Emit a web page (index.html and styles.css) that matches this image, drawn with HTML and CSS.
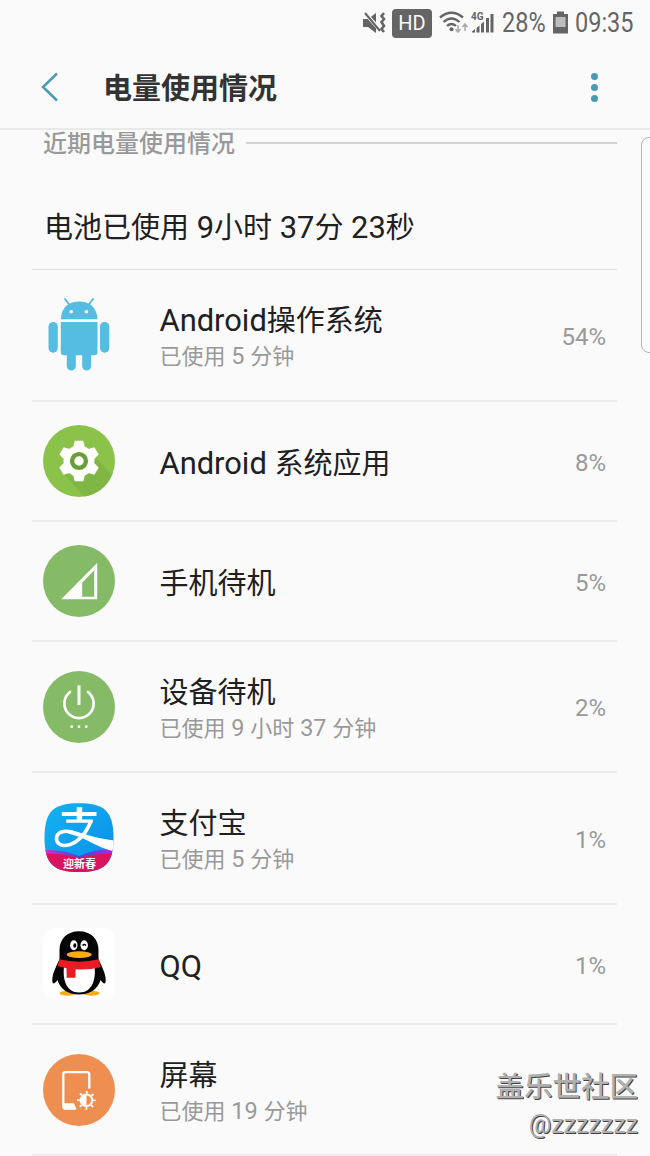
FILE: index.html
```html
<!DOCTYPE html>
<html lang="zh-CN">
<head>
    <meta charset="UTF-8">
    <title>电量使用情况</title>
    <link rel="stylesheet" href="styles.css">
</head>
<body>
<div class="status">
    <svg class="mute" width="24" height="24" viewBox="0 0 24 24">
        <path d="M0 8h5l8-6v20l-8-6H0z" fill="#656565"/>
        <path d="M1 1l17 19" stroke="#fafafa" stroke-width="4"/>
        <path d="M2 2l15 18" stroke="#656565" stroke-width="2"/>
        <path d="M21 2l-2.500 3 2.500 3-2.500 3 2.500 4-2.500 3 2.500 3" fill="none" stroke="#656565" stroke-width="2.600"/>
    </svg>
    <span class="hd">HD</span>
    <svg class="wifi" width="30" height="24" viewBox="0 0 30 24">
        <path d="M1 6.500Q12.500-3 24 6.500M4.500 11Q12.500 4 20.500 11M8 15Q12.500 11 17 15" fill="none" stroke="#656565" stroke-width="2.300"/>
        <circle cx="12.500" cy="18.200" r="2" fill="#656565"/>
        <path d="M19 14v6M16.500 18l2.500 3 2.500-3M26 20v-6M23.500 16l2.500-3 2.500 3" fill="none" stroke="#aaa" stroke-width="1.500"/>
    </svg>
    <svg class="signal" width="24" height="24" viewBox="0 0 24 24">
        <text x="-1" y="9" class="net">4G</text>
        <path d="M0 21.500v-1l3-2.500v3.500zM4.500 17l3-2.500v7H4.500zM9 13l3-2.500v11H9zM14 7h3v14.500h-3zM18.500 3h3v18.500h-3z" fill="#656565"/>
    </svg>
    <span class="level">28%</span>
    <svg class="battery" width="15" height="24" viewBox="0 0 15 24">
        <path d="M4 0.500h7V3h4v19.500H0V3h4z" fill="#656565"/>
        <path d="M2.500 6h10v10h-10z" fill="#bdbdbd"/>
    </svg>
    <span class="clock">09:35</span>
</div>

<div class="header">
    <svg class="back" width="18" height="30" viewBox="0 0 18 30">
        <path d="M17 1.500L3 15l14 13.500" fill="none" stroke="#4a9bb2" stroke-width="2.500"/>
    </svg>
    <h1>电量使用情况</h1>
    <div class="more"><i></i><i></i><i></i></div>
</div>

<div class="section"><span>近期电量使用情况</span></div>

<div class="list">
    <div class="total">电池已使用<em> 9</em>小时<em> 37</em>分<em> 23</em>秒</div>

    <div class="row two">
        <svg class="icon" viewBox="0 0 72 72">
            <g fill="#55bde2">
                <path d="M17.800 20.200C18.500 8 26 2.500 36.200 2.500S53.800 8 54.500 20.200z"/>
                <path d="M22 0l4.500 6M50 0l-4.500 6" stroke="#55bde2" stroke-width="2" stroke-linecap="round"/>
                <rect x="5.500" y="23" width="9.300" height="30.700" rx="4.600"/>
                <rect x="57" y="23" width="9.300" height="30.700" rx="4.600"/>
                <path d="M17.800 23h36.700v30.200a3 3 0 0 1-3 3H20.800a3 3 0 0 1-3-3z"/>
                <path d="M23.800 54h9v13a4.500 4.500 0 0 1-9 0zM39.200 54h9v13a4.500 4.500 0 0 1-9 0z"/>
            </g>
            <circle cx="28.200" cy="12.800" r="1.800" fill="#fafafa"/>
            <circle cx="43.400" cy="12.800" r="1.800" fill="#fafafa"/>
        </svg>
        <div class="info"><p class="name"><em>Android</em>操作系统</p><p class="used">已使用<em> 5 </em>分钟</p></div>
        <span class="pct">54%</span>
    </div>

    <div class="row">
        <svg class="icon" viewBox="0 0 72 72">
            <circle cx="36" cy="36" r="36" fill="#8bc34a"/>
            <path d="M21 49l20 22.500A36 36 0 0 0 69 50L54 34z" fill="#7fb644"/>
            <g fill="#fff">
                <circle cx="36" cy="36" r="15.500"/>
                <path id="tooth" d="M31.700 15.700h8.600l2 8v24.600l-2 8h-8.600l-2-8V23.700z"/>
                <use href="#tooth" transform="rotate(60 36 36)"/>
                <use href="#tooth" transform="rotate(120 36 36)"/>
            </g>
            <circle cx="36" cy="36" r="6.900" fill="#fff" stroke="#689f38" stroke-width="4.400"/>
        </svg>
        <div class="info"><p class="name"><em>Android </em>系统应用</p></div>
        <span class="pct">8%</span>
    </div>

    <div class="row">
        <svg class="icon" viewBox="0 0 72 72">
            <circle cx="36" cy="36" r="36" fill="#85bb66"/>
            <path d="M18.200 54.300l36-36.300v36.300zM39.200 37.700v14h12V25.300z" fill="#fff" fill-rule="evenodd"/>
        </svg>
        <div class="info"><p class="name">手机待机</p></div>
        <span class="pct">5%</span>
    </div>

    <div class="row two device">
        <svg class="icon" viewBox="0 0 72 72">
            <circle cx="36" cy="36" r="36" fill="#85bb66"/>
            <path d="M27 21a14.600 14.600 0 1 0 18 0" fill="none" stroke="#fff" stroke-width="2.700" stroke-linecap="round"/>
            <path d="M36 14.300v19.700" stroke="#fff" stroke-width="3"/>
            <g fill="#fff"><circle cx="28.700" cy="55.700" r="1.400"/><circle cx="36" cy="55.700" r="1.400"/><circle cx="43.300" cy="55.700" r="1.400"/></g>
        </svg>
        <div class="info"><p class="name">设备待机</p><p class="used">已使用<em> 9 </em>小时<em> 37 </em>分钟</p></div>
        <span class="pct">2%</span>
    </div>

    <div class="row two">
        <svg class="icon" viewBox="0 0 72 72">
            <defs>
                <linearGradient id="sky" x1="0" y1="0" x2="1" y2="1"><stop offset="0" stop-color="#12b4f2"/><stop offset="1" stop-color="#0b8be8"/></linearGradient>
                <linearGradient id="violet"><stop offset="0" stop-color="#e02bc0"/><stop offset=".5" stop-color="#3a4fe0"/><stop offset="1" stop-color="#b026d8"/></linearGradient>
                <clipPath id="tile"><path d="M36 1.300C60 1.300 70.500 8 70.500 35.700S60 70 36 70 1.500 63.500 1.500 35.700 12 1.300 36 1.300z"/></clipPath>
            </defs>
            <g clip-path="url(#tile)">
                <path d="M0 0h72v72H0z" fill="url(#sky)"/>
                <path d="M0 48Q20 47 36 54 52 47 72 47V60H0z" fill="url(#violet)"/>
                <path d="M0 51.500Q20 51.500 36 55.500 52 51.500 72 51.500V72H0z" fill="#d9145f"/>
                <path d="M18.800 10h34.700v4H18.800zM33.700 5.300h5.500V19h-5.500zM23.200 17.500h26.600v3.200H23.200z" fill="#fff"/>
                <path d="M48 19C44 29 37 39 27 42.500 18 45.500 13 41 13.500 36 14 30.500 21 27.500 30 30.500" fill="none" stroke="#fff" stroke-width="3.600"/>
                <path d="M25 28C34 28 44 35 71 38.500V49.500C55 46 42 35 25 31.500z" fill="#fff"/>
            </g>
            <text x="36.500" y="66" class="spring">迎新春</text>
        </svg>
        <div class="info"><p class="name">支付宝</p><p class="used">已使用<em> 5 </em>分钟</p></div>
        <span class="pct">1%</span>
    </div>

    <div class="row">
        <svg class="icon" viewBox="0 0 72 72">
            <rect width="72" height="72" rx="13" fill="#fff"/>
            <ellipse cx="24.500" cy="65.300" rx="8" ry="2.500" fill="#f8ac18"/>
            <ellipse cx="48.500" cy="65.300" rx="8" ry="2.500" fill="#f8ac18"/>
            <path d="M36 3.200C24 3.200 16.500 11 16.500 22v9C13 39 9 46 9.300 53c.2 4 2.500 2.500 5.200-1C17 61 25 66.500 36 66.500S55 61 57.500 52c2.700 3.500 5 5 5.200 1C63 46 59 39 55.500 31v-9C55.500 11 48 3.200 36 3.200z" fill="#050505"/>
            <path d="M21 39h30.500c1.500 12-2 25.500-15.300 25.500S19.500 51 21 39z" fill="#fff"/>
            <ellipse cx="30.800" cy="17.200" rx="3.700" ry="5" fill="#fff"/>
            <ellipse cx="41.200" cy="17.200" rx="3.700" ry="5" fill="#fff"/>
            <ellipse cx="31.800" cy="17.500" rx="1.500" ry="2.200"/>
            <path d="M39.500 17.500q1.700-2 3.500 0" fill="none" stroke="#000" stroke-width="1.400"/>
            <ellipse cx="36.200" cy="26.600" rx="12.500" ry="3.400" fill="#f8ac18"/>
            <path d="M16.500 31.300Q36 36 55.500 31.300L57.800 39Q45 42.500 32.500 41.300v8.500h-8.800l-.2-9.500L14.500 38z" fill="#e81c22"/>
        </svg>
        <div class="info"><p class="name"><em>QQ</em></p></div>
        <span class="pct">1%</span>
    </div>

    <div class="row two screen">
        <svg class="icon" viewBox="0 0 72 72">
            <circle cx="36" cy="36" r="36" fill="#ef8e51"/>
            <path d="M46.300 34.500V20.500a2.300 2.300 0 0 0-2.300-2.300H22.600a2.300 2.300 0 0 0-2.300 2.300v32a2 2 0 0 0 2 2H33" fill="none" stroke="#fff" stroke-width="2.300"/>
            <path d="M20 49.300h11l2.500 6H21z" fill="#fff"/>
            <circle cx="43.500" cy="46.300" r="5.800" fill="none" stroke="#fff" stroke-width="2"/>
            <path d="M43.500 40.500a5.800 5.800 0 0 0 0 11.600z" fill="#fff"/>
            <circle cx="43.500" cy="46.300" r="8" fill="none" stroke="#fff" stroke-width="2.800" stroke-dasharray="1.800 4.483" stroke-dashoffset=".9"/>
        </svg>
        <div class="info"><p class="name">屏幕</p><p class="used">已使用<em> 19 </em>分钟</p></div>
    </div>
</div>

<div class="edge"></div>
<div class="mark"><b>盖乐世社区</b><span>@zzzzzzz</span></div>
</body>
</html>
```
FILE: styles.css
```css
*{
    padding:0;
    margin:0;
    box-sizing:border-box;
}

body{
    position:relative;
    width:650px;
    height:1156px;
    overflow:hidden;
    background-color:#fafafa;
    color:#202020;
    font-family:Roboto,"Noto Sans CJK SC",sans-serif;
}

svg{
    display:block;
    flex:none;
    overflow:visible;
}

/* 英文和数字比汉字略大 */
em{
    font-size:1.065em;
    font-style:normal;
    line-height:1;
}

/* 状态栏 */
.status{
    display:flex;
    align-items:center;
    height:46px;
    padding-left:363px;
    color:#656565;
}

.hd{
    width:40px;
    height:29px;
    margin:0 7px 0 5px;
    border-radius:4px;
    background-color:#656565;
    color:#fafafa;
    font-size:20px;
    line-height:29px;
    text-align:center;
}

.signal{
    margin-left:3px;
}

.net{
    font-size:10px;
    font-weight:bold;
    fill:#656565;
}

.level,.clock{
    font-size:27px;
    line-height:46px;
    white-space:nowrap;
    transform:scaleX(.87);
    transform-origin:left center;
}

.level{
    width:51px;
    margin-left:6px;
}

.clock{
    width:68px;
    margin-left:7px;
}

/* 标题栏 */
.header{
    display:flex;
    align-items:center;
    height:84px;
    padding:0 51px 0 40px;
    border-bottom:2px solid #e9e9e9;
}

.header h1{
    flex:1;
    margin-left:45px;
    padding-top:4px;
    color:#333;
    font-size:29px;
    font-weight:bold;
    line-height:40px;
}

.more i{
    display:block;
    width:7px;
    height:7px;
    margin:4px 1px;
    border-radius:50%;
    background-color:#4a9bb2;
}

.section{
    display:flex;
    align-items:center;
    height:26px;
    padding:0 33px 0 43px;
    color:#999;
    font-size:24px;
    font-weight:500;
    line-height:26px;
}

.section span{
    padding-top:2px;
}

.section:after{
    content:"";
    flex:1;
    height:2px;
    margin-left:11px;
    background-color:#d2d2d2;
}

.list{
    padding:0 33px 0 32px;
}

.total{
    height:114px;
    padding:52px 0 0 12px;
    border-bottom:1px solid #e2e2e2;
    font-size:29px;
    line-height:40px;
}

.row{
    display:flex;
    align-items:center;
    height:120px;
    padding:0 11px;
    border-bottom:2px solid #ececec;
}

.two{
    height:132px;
}

.device,.screen{
    height:131px;
}

.icon{
    width:72px;
    height:72px;
}

.info{
    flex:1;
    margin-left:44.5px;
    padding-top:5px;
}

.name{
    font-size:29px;
    line-height:38px;
}

.used{
    color:#999;
    font-size:22px;
    line-height:33px;
}

.pct{
    padding-top:3px;
    color:#999;
    font-size:24px;
}

.spring{
    font-size:11px;
    font-weight:bold;
    fill:#fff;
    text-anchor:middle;
}

/* 右侧滑动条 */
.edge{
    position:absolute;
    top:137px;
    left:641px;
    width:20px;
    height:216px;
    border:1px solid #b5b5b5;
    border-radius:8px;
}

/* 水印 */
.mark{
    position:absolute;
    right:12px;
    bottom:13px;
    color:#b0b0b0;
    text-align:right;
    text-shadow:1px 1px 0 #444;
}

.mark b{
    display:block;
    font-size:28.5px;
    font-weight:500;
    line-height:38px;
}

.mark span{
    display:block;
    font-size:25px;
    line-height:36px;
}
```
